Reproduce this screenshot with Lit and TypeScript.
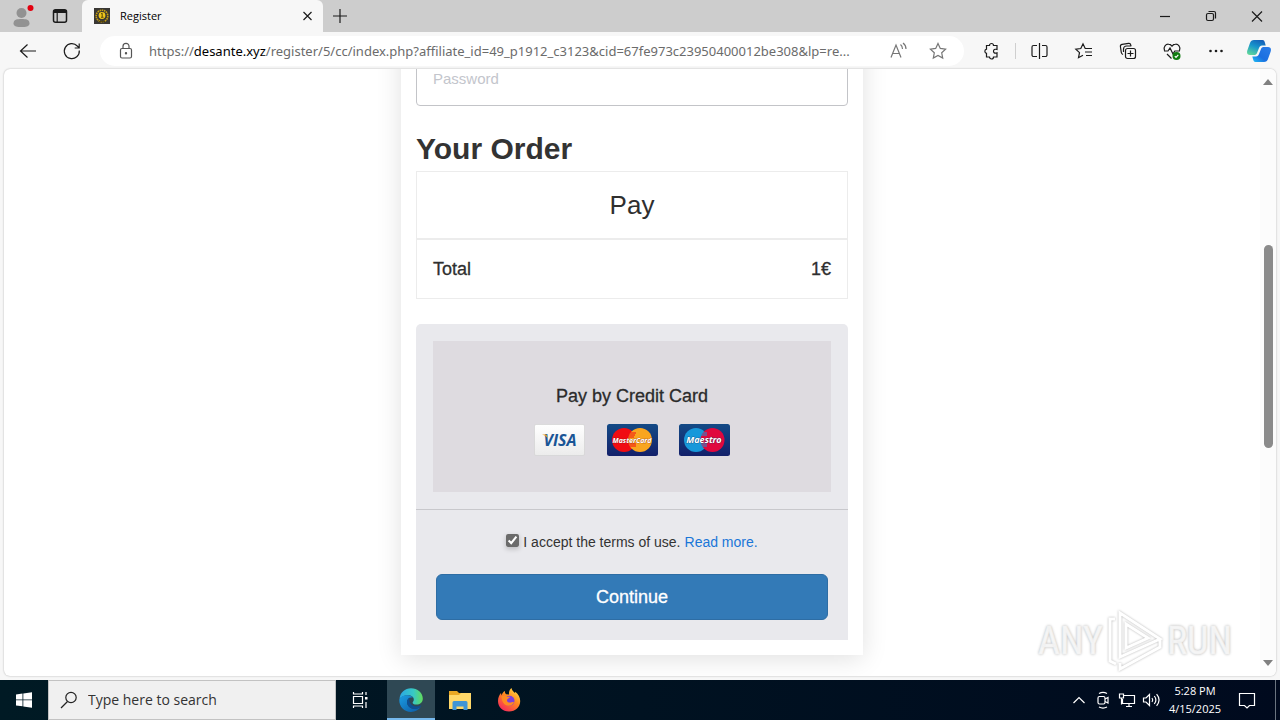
import { LitElement, html, css, svg } from "lit";
import { customElement, property, state } from "lit/decorators.js";

const icons: Record<string, unknown> = {
  profile: svg`<circle cx="10.500" cy="7" r="5" fill="#929292"/><path d="M2.500 17.500C2.500 13.500 6 13 10.500 13s8 .5 8 4.500c0 3-4 3.500-8 3.500s-8-.5-8-3.500Z" fill="#929292"/><circle cx="19.500" cy="2" r="3" fill="#e3000f"/>`,
  workspaces: svg`<rect x="4.500" y="3.700" width="13" height="12.600" rx="2" stroke-width="1.500"/><path d="M4.500 5.500h13" stroke-width="3"/><path d="M8.200 7v9"/>`,
  close: svg`<path d="M6.500 6l8 8M14.500 6l-8 8"/>`,
  plus: svg`<path d="M10 3v14M3 10h14"/>`,
  minimize: svg`<path d="M5 10.500h10"/>`,
  restore: svg`<rect x="5.500" y="7.500" width="7" height="7" rx="1.500"/><path d="M7.500 5.500H13a1.500 1.500 0 0 1 1.500 1.500v5.500"/>`,
  winclose: svg`<path d="M5 5.500l10 10M15 5.500l-10 10"/>`,
  back: svg`<path d="M18 10H2.500M9.500 3.500L2.500 10l7 6.500"/>`,
  reload: svg`<path d="M17.300 9.500a7.500 7.500 0 1 1-2-4.500l1.700 1.700M17.200 2.500v4.500h-4.500"/>`,
  lock: svg`<rect x="5.500" y="7.500" width="11" height="9.500" rx="1.500"/><path d="M8 7.500V5.300a3 3 0 0 1 6 0v2.200"/><circle cx="11" cy="12.200" r=".6" fill="currentColor"/>`,
  read: svg`<path d="M2 16.500L7 4l5 12.500M3.800 12.500h6.400M11.500 3.500c1.500 1.200 2 2.700 2 4.500M14 2c2 1.500 3 3.500 3 6"/>`,
  star: svg`<path d="M9 2.500l2.300 4.900 5.300.7-3.900 3.700 1 5.300L9 14.500l-4.700 2.600 1-5.300L1.400 8.100l5.300-.7z"/>`,
  extensions: svg`<path d="M4.500 4.500h3a2 2 0 0 1 4 0h3.500v4c-2.500-.8-3.500.3-3.500 1.700s1 2.500 3.500 1.700v4.100h-3.500a2 2 0 0 1-4 0h-3v-3.700a2.100 2.100 0 0 1 0-4.100z"/>`,
  split: svg`<path d="M9.500 2v16M7 4.500H3.500A1.500 1.500 0 0 0 2 6v8a1.500 1.500 0 0 0 1.500 1.500H7M12 4.500h3.500A1.500 1.500 0 0 1 17 6v8a1.500 1.500 0 0 1-1.500 1.500H12"/>`,
  favorites: svg`<path d="M12 7.500h-.8L9 2.800 6.800 7.500l-5 .6 3.700 3.500-1 5.100L9 14.200M12 7.500h6M11 11h7M12 14.500h6"/>`,
  collections: svg`<rect x="7.500" y="7.500" width="10" height="10" rx="2"/><path d="M12.500 9.500v6M9.500 12.500h6M5 13.500c-1-.4-1.500-1-1.700-2L2.400 5.500a2 2 0 0 1 1.700-2.200l6.500-.9a2 2 0 0 1 2.200 1.600l.2 1.200M5.500 11V8a3 3 0 0 1 3-3h5"/>`,
  essentials: svg`<path d="M2.500 9.500C1 5.500 4 3 6.500 3.200 8.300 3.300 9.300 4.300 10 5.200c.7-.9 1.700-1.900 3.500-2 2.500-.2 5.500 2.300 4 6.300M2 10h4l2-3 3 6 1.800-3H18M5 13l4.500 4.500"/><circle cx="14.500" cy="15" r="4" fill="#107c10" stroke="none"/><path d="M12.800 15.200l1.200 1.200 2.300-2.500" stroke="#fff"/>`,
  more: svg`<g fill="currentColor" stroke="none"><circle cx="4.500" cy="10" r="1.300"/><circle cx="10" cy="10" r="1.300"/><circle cx="15.500" cy="10" r="1.300"/></g>`,
  windows: svg`<path d="M2 4.400l6.500-.9v6H2zM9.300 3.400L18 2.200v7.300H9.300zM2 10.300h6.500v6L2 15.400zM9.300 10.300H18v7.400l-8.700-1.200z" fill="#fff" stroke="none"/>`,
  search: svg`<circle cx="12" cy="7.500" r="5.200"/><path d="M8.500 11.500L2 18"/>`,
  taskview: svg`<path d="M3.500 2v2h9V2M3.500 18v-2h9v2M3.500 6.500h9v7h-9zM16 2v3M16 12v6"/><rect x="15" y="7" width="2.500" height="2.500" fill="#fff" stroke="none"/>`,
  chevron: svg`<path d="M4.500 13l5.500-5.500 5.500 5.500"/>`,
  camera: svg`<rect x="5" y="6.500" width="7" height="7.500" rx="1.500"/><path d="M12 9l3-1.500v5.500l-3-1.500M6 3.500c2.500-1.300 5.500-1.300 8 0M6 17c2.500 1.300 5.500 1.300 8 0"/>`,
  network: svg`<path d="M7 5.500h10.500v8H5.500V9M9 16.500h6M12 13.500v3M2.500 4h4v4h-4zM4.500 8v6.500"/>`,
  sound: svg`<path d="M2.500 8v4h2.500l3.500 3.500v-11L5 8zM11 8c1 1.300 1 2.700 0 4M13.300 6c2 2.500 2 5.500 0 8M15.600 4.200c3 3.500 3 8 0 11.600"/>`,
  notify: svg`<path d="M2.500 3.500h15v12h-5L10 18l-2.500-2.500h-5z"/>`,
};

@customElement("ui-icon")
class UiIcon extends LitElement {
  @property() name = "";
  static styles = css`
    :host { display: inline-flex; }
    svg { width: 20px; height: 20px; overflow: visible; fill: none; stroke: currentColor; stroke-width: 1.200; }
    .profile { stroke: none; }
  `;
  render() {
    return html`<svg class=${this.name} viewBox="0 0 20 20" aria-hidden="true">${icons[this.name]}</svg>`;
  }
}

@customElement("browser-chrome")
class BrowserChrome extends LitElement {
  static styles = css`
    :host { display: block; font: 12px/16px "Open Sans", "Noto Sans", sans-serif; color: #1b1b1b; }
    button { border: 0; padding: 0; background: none; color: inherit; font: inherit; display: flex; align-items: center; justify-content: center; }
    .strip { display: flex; height: 32px; background: #cdcdcd; }
    .side { display: flex; padding: 0 4px 0 2px; }
    .side button { width: 38px; }
    .tab { flex: 0 1 241px; box-sizing: border-box; display: flex; align-items: center; padding: 0 6px 0 12px; background: #f7f7f7; border-radius: 6px 6px 0 0; }
    .favicon { width: 16px; height: 16px; margin-right: 10px; }
    .title { flex: 1; font-size: 11px; color: #000; }
    .tab button { width: 20px; height: 20px; }
    .new { width: 34px; }
    .window { display: flex; margin-left: auto; }
    .window button { width: 46px; }
    .bar { display: flex; align-items: center; height: 37px; padding-left: 6px; background: #f7f7f7; }
    .bar > button { width: 44px; height: 30px; }
    .address { flex: 1; min-width: 0; display: flex; align-items: center; height: 30px; margin: 0 6px; border-radius: 15px; background: #fff; }
    .address button { width: 40px; height: 30px; color: #767676; }
    .address .lock { width: 49px; color: #555; }
    .address .end { margin-right: 5px; }
    .url { flex: 1; min-width: 0; overflow: hidden; white-space: nowrap; font-family: "Noto Sans", "Open Sans", sans-serif; font-size: 13px; line-height: 20px; color: #6b6b6b; }
    .url b { font-weight: 400; color: #000; }
    .rule { width: 1px; height: 16px; margin: 0 2px 0 1px; background: #cfcfcf; }
    .bar > .copilot { width: 42px; }
    .copilot svg { width: 24px; height: 24px; }
  `;
  render() {
    return html`
      <div class="strip">
        <div class="side">
          <button aria-label="Profile"><ui-icon name="profile"></ui-icon></button>
          <button aria-label="Tab actions"><ui-icon name="workspaces"></ui-icon></button>
        </div>
        <div class="tab">
          <svg class="favicon" viewBox="0 0 16 16" aria-hidden="true">
            <rect width="16" height="16" fill="#3a3834"/>
            <circle cx="8" cy="8" r="5.800" fill="none" stroke="#c9a010" stroke-width="1.600" stroke-dasharray="1.500 .7"/>
            <circle cx="8" cy="7.500" r="3.400" fill="#efc61b"/>
            <path d="M7 6l1.200-.8V9M7 9.300h2.500M5 13.500h6" stroke="#4d3e08" fill="none" stroke-width=".9"/>
          </svg>
          <span class="title">Register</span>
          <button aria-label="Close tab"><ui-icon name="close"></ui-icon></button>
        </div>
        <button class="new" aria-label="New tab"><ui-icon name="plus"></ui-icon></button>
        <div class="window">
          <button aria-label="Minimize"><ui-icon name="minimize"></ui-icon></button>
          <button aria-label="Restore"><ui-icon name="restore"></ui-icon></button>
          <button aria-label="Close"><ui-icon name="winclose"></ui-icon></button>
        </div>
      </div>
      <div class="bar">
        <button aria-label="Back"><ui-icon name="back"></ui-icon></button>
        <button aria-label="Refresh"><ui-icon name="reload"></ui-icon></button>
        <div class="address">
          <button class="lock" aria-label="Site information"><ui-icon name="lock"></ui-icon></button>
          <div class="url" role="textbox" tabindex="0" aria-label="Address">https://<b>desante.xyz</b>/register/5/cc/index.php?affiliate_id=49_p1912_c3123&amp;cid=67fe973c23950400012be308&amp;lp=re...</div>
          <button aria-label="Read aloud"><ui-icon name="read"></ui-icon></button>
          <button class="end" aria-label="Favorite"><ui-icon name="star"></ui-icon></button>
        </div>
        <button aria-label="Extensions"><ui-icon name="extensions"></ui-icon></button>
        <span class="rule"></span>
        ${["split", "favorites", "collections", "essentials", "more"].map(
          (n) => html`<button aria-label=${n}><ui-icon name=${n}></ui-icon></button>`
        )}
        <button class="copilot" aria-label="Copilot">
          <svg viewBox="0 0 24 24">
            <defs>
              <linearGradient id="ca" x1="0.700" y1="0" x2=".2" y2="1"><stop stop-color="#1560b8"/><stop offset=".45" stop-color="#1795cc"/><stop offset="1" stop-color="#5fd79a"/></linearGradient>
              <linearGradient id="cb" x1="1" y1="0" x2="0" y2="1"><stop stop-color="#2b7de8"/><stop offset=".6" stop-color="#1b6fe0"/><stop offset="1" stop-color="#1fc0f5"/></linearGradient>
            </defs>
            <path d="M7 1h8.500c1.500 0 2 1 2.500 3l.7 2.500H15c-1.500 0-2.500 1-3 2.500l-2 5c-.6 1.500-1.500 2-3 2H3c-2.500 0-3.500-1.500-2.700-4.500L3 4c.6-2 2-3 4-3Z" fill="url(#ca)"/>
            <path d="M17 23H8.500c-1.500 0-2-1-2.500-3l-.7-2.500H9c1.500 0 2.500-1 3-2.500l2-5c.6-1.500 1.500-2 3-2h4c2.500 0 3.500 1.500 2.700 4.500L21 20c-.6 2-2 3-4 3Z" fill="url(#cb)"/>
          </svg>
        </button>
      </div>
    `;
  }
}

@customElement("order-card")
class OrderCard extends LitElement {
  @state() private accepted = true;
  static styles = css`
    :host { display: block; box-sizing: border-box; width: 462px; max-width: 100%; padding: 15px; background: #fff; box-shadow: 0 4px 24px rgba(0, 0, 0, .12); color: #333; font: 18px/24px "Liberation Sans", Arial, sans-serif; }
    .password { display: block; box-sizing: border-box; width: 100%; height: 54px; padding: 0 16px 2px; border: 1px solid #c3c4c8; border-radius: 4px; font: 15px/20px "Liberation Sans", Arial, sans-serif; background: #fff; }
    .password::placeholder { color: #c3c5cc; opacity: 1; }
    h2 { margin: 25px 0 4px; font-size: 30px; line-height: 36px; font-weight: 700; color: #333; }
    .row { display: flex; justify-content: space-between; align-items: center; padding: 17px 16px; border: 1px solid #ececec; color: #2f2f2f; -webkit-text-stroke: .3px currentColor; }
    .pay { justify-content: center; padding: 16px; font-size: 26px; line-height: 34px; -webkit-text-stroke: 0; }
    .payment { margin-top: 25px; background: #e9e9ed; border-radius: 5px 5px 0 0; }
    .methods { padding: 17px; border-bottom: 1px solid #c8c8cc; }
    .method { display: flex; flex-direction: column; align-items: center; gap: 16px; padding: 43px 0 36px; background: #dedbe0; color: #2b2b2b; -webkit-text-stroke: .3px currentColor; }
    .logos { display: flex; gap: 20px; -webkit-text-stroke: 0; }
    .logos svg { width: 52px; height: 32px; }
    .logos text { font-family: "Open Sans", sans-serif; font-weight: 700; font-style: italic; text-anchor: middle; }
    .confirm { padding: 20px; display: flex; flex-direction: column; gap: 20px; }
    .terms { display: flex; justify-content: center; align-items: center; gap: 4px; font-size: 14px; line-height: 24px; }
    .terms input { width: 13px; height: 13px; margin: 0 0 3px; accent-color: #6b6b6b; box-shadow: 0 2px 5px rgba(0, 0, 0, .2); }
    .terms a { color: #1a76d8; text-decoration: none; }
    .continue { height: 46px; border: 1px solid #2e6da4; border-radius: 6px; background: #337ab7; color: #fff; font: inherit; -webkit-text-stroke: .3px currentColor; }
  `;
  render() {
    return html`
      <input class="password" type="password" placeholder="Password" aria-label="Password">
      <h2>Your Order</h2>
      <div class="row pay">Pay</div>
      <div class="row"><span>Total</span><span>1€</span></div>
      <section class="payment">
        <div class="methods">
          <div class="method">
            <span>Pay by Credit Card</span>
            <div class="logos">
              <svg viewBox="0 0 52 32" role="img" aria-label="Visa">
                <defs><linearGradient id="v" x2="0" y2="1"><stop stop-color="#fff"/><stop offset="1" stop-color="#ececec"/></linearGradient></defs>
                <rect x=".5" y=".5" width="50" height="31" rx="1.500" fill="url(#v)" stroke="#d3d3d3" stroke-width=".7"/>
                <text x="26" y="22" font-size="16" fill="#1a5596">VISA</text>
                <path d="M8 10.500h4.500l1.500 4c-1.500-2-3-3.300-6-4Z" fill="#e8a32b"/>
              </svg>
              <svg viewBox="0 0 52 32" role="img" aria-label="MasterCard">
                <defs><linearGradient id="m" x2="0" y2="1"><stop stop-color="#134a86"/><stop offset="1" stop-color="#13206a"/></linearGradient></defs>
                <rect x="1" width="51" height="32" rx="2.500" fill="url(#m)"/>
                <circle cx="18" cy="16" r="12" fill="#f00c12"/><circle cx="34" cy="16" r="12" fill="#f9a51f"/>
                <path d="M22 9h8M22 11h7M21 13h7M22 20h8M23 22h7" stroke="#f00c12"/>
                <text x="26" y="19" font-size="7" fill="#fff" stroke="#7a1712" stroke-width=".4" paint-order="stroke">MasterCard</text>
              </svg>
              <svg viewBox="0 0 52 32" role="img" aria-label="Maestro">
                <defs><linearGradient id="s" x2="0" y2="1"><stop stop-color="#134a86"/><stop offset="1" stop-color="#13206a"/></linearGradient></defs>
                <rect x="1" width="51" height="32" rx="2.500" fill="url(#s)"/>
                <circle cx="18" cy="16" r="12" fill="#1798da"/><circle cx="34.500" cy="16" r="12" fill="#e0083e"/>
                <path d="M22 9h7M22 11h7M22 20h7M23 22h6" stroke="#1798da"/>
                <text x="26" y="19" font-size="9" fill="#fff" stroke="#17345f" stroke-width=".5" paint-order="stroke">Maestro</text>
              </svg>
            </div>
          </div>
        </div>
        <div class="confirm">
          <div class="terms">
            <input id="accept" type="checkbox" .checked=${this.accepted}
              @change=${(e: Event) => (this.accepted = (e.target as HTMLInputElement).checked)}>
            <label for="accept">I accept the terms of use.</label>
            <a href="#terms">Read more.</a>
          </div>
          <button class="continue">Continue</button>
        </div>
      </section>
    `;
  }
}

@customElement("task-bar")
class TaskBar extends LitElement {
  static styles = css`
    :host { display: flex; height: 40px; background: linear-gradient(90deg, #001a24, #000a1e); color: #fff; font: 11px/18px "Open Sans", "Noto Sans", sans-serif; }
    button { border: 0; padding: 0; width: 48px; background: none; color: inherit; font: inherit; display: flex; align-items: center; justify-content: center; }
    .search { flex: 0 1 288px; box-sizing: border-box; display: flex; align-items: center; gap: 9px; padding: 0 10px; background: #f0f0f0; border: 1px solid #c2c2c2; color: #222; }
    .search input { flex: 1; min-width: 0; border: 0; padding: 0; background: none; font: 14px/20px "Open Sans", "Noto Sans", sans-serif; }
    .search input::placeholder { color: #333; opacity: 1; }
    .apps { display: flex; margin-left: 3px; }
    .app { width: 49px; }
    .app svg { width: 26px; height: 26px; }
    .active { width: 48px; box-sizing: border-box; background: #2f4854; border-bottom: 2px solid #76b9ed; border-top: 2px solid transparent; }
    .tray { display: flex; margin-left: auto; }
    .tray button { width: 24px; }
    .tray .clock { width: 64px; flex-direction: column; }
    .tray .notify { width: 40px; }
    .desktop { width: 4px; margin-left: 8px; border-left: 1px solid #6a7480; }
  `;
  render() {
    return html`
      <button aria-label="Start"><ui-icon name="windows"></ui-icon></button>
      <label class="search"><ui-icon name="search"></ui-icon><input placeholder="Type here to search" aria-label="Search"></label>
      <button aria-label="Task view"><ui-icon name="taskview"></ui-icon></button>
      <div class="apps">
        <button class="active app" aria-label="Edge">
          <svg viewBox="0 0 26 26">
            <defs>
              <linearGradient id="e1" x1="0" y1=".3" x2="1" y2=".3"><stop stop-color="#2aa7e6"/><stop offset=".6" stop-color="#38c9c4"/><stop offset="1" stop-color="#62dc5b"/></linearGradient>
              <linearGradient id="e2" x2="1" y2="1"><stop stop-color="#1b9de2"/><stop offset="1" stop-color="#0c59a4"/></linearGradient>
            </defs>
            <path d="M1.500 12C2 5.500 7 1.200 13 1.200c6.500 0 11.800 4.500 11.800 10.300 0 4-3 6-6.200 6-2.800 0-4-1-4-1.800 0-.7 1.200-1.200 1.200-3.200 0-2.300-2.300-4.200-5.800-4.200-4 0-7 1.700-8.500 3.700Z" fill="url(#e1)"/>
            <path d="M1.300 12.500C2.500 9.500 6 8 10 8.300c2 .2 4 1.200 5 2.500-3-1.300-6 .7-6 4.200 0 4 3.500 7 8 7 2 0 4-.8 5.700-1.900-2 3-5.500 4.800-9.700 4.800-6.500 0-12-5-11.700-12.400Z" fill="url(#e2)"/>
            <path d="M9 15c0-2 1-3.500 2.500-4.300-1 4.800 2 8.600 7 8.700 1.800 0 3.200-.4 4.400-.9.400-.1.600.3.300.6C21.500 21.200 19 22 17 22c-4.500 0-8-3-8-7Z" fill="#0d4f94"/>
          </svg>
        </button>
        <button class="app" aria-label="File Explorer">
          <svg viewBox="0 0 26 26">
            <path d="M2 4h8l2 2h12v16H2z" fill="#e9a824"/><path d="M2 8h10l2-2h10v16H2z" fill="#ffd869"/>
            <path d="M7 14h12a1.500 1.500 0 0 1 1.500 1.500V23h-4v-3.500h-7V23h-4v-7.500A1.500 1.500 0 0 1 7 14Z" fill="#3f95d6"/>
          </svg>
        </button>
        <button class="app" aria-label="Firefox">
          <svg viewBox="0 0 26 26">
            <defs><linearGradient id="f" x1=".9" y1="0" x2=".2" y2="1"><stop stop-color="#ffe34a"/><stop offset=".45" stop-color="#ff8a1f"/><stop offset="1" stop-color="#f5245e"/></linearGradient></defs>
            <path d="M13 24.500C6.500 24.500 2 20 2 14c0-3.500 1.300-6 3-8l.5 2.500C6.500 6 7.500 4.500 9 4c-.3 1.500.3 2.700 1.300 3.300L13 7.500c-.3-3 .8-5 2.500-6.500.5 2.500 2 3.500 3.500 5l.3-1.300C22.500 7 24.200 10.500 24.200 14c0 6-4.700 10.500-11.200 10.500Z" fill="url(#f)"/>
            <circle cx="13.500" cy="13.700" r="5" fill="#7b3fdc"/>
            <path d="M5.500 9c2-1 4.500-.5 5.500.7h3c-.2 1.500-2.500 1.600-3 3-.3 1.500 1 2.800 3 2.800 1.500 0 2.500-.8 4-.5-.7 2.500-3 4-5.500 3.800C8.500 18.500 5.500 15 5.500 9Z" fill="#ff8b22"/>
          </svg>
        </button>
      </div>
      <div class="tray">
        ${["chevron", "camera", "network", "sound"].map(
          (n) => html`<button aria-label=${n}><ui-icon name=${n}></ui-icon></button>`
        )}
        <button class="clock"><span>5:28 PM</span><span>4/15/2025</span></button>
        <button class="notify" aria-label="Notifications"><ui-icon name="notify"></ui-icon></button>
        <span class="desktop"></span>
      </div>
    `;
  }
}

@customElement("app-root")
class AppRoot extends LitElement {
  static styles = css`
    :host { display: flex; flex-direction: column; height: 100vh; background: #f7f7f7; position: relative; overflow: hidden; }
    .view { flex: 1; min-height: 0; display: flex; margin: 0 4px 4px; border-radius: 6px; background: #fff; overflow: hidden; box-shadow: 0 0 2px rgba(0, 0, 0, .3); }
    .page { flex: 1; min-width: 0; display: flex; flex-direction: column; align-items: center; justify-content: flex-end; padding-bottom: 21px; overflow: hidden; }
    order-card { flex: none; }
    .scroll { width: 16px; display: flex; flex-direction: column; align-items: center; background: #fcfcfc; padding: 10px 0; box-sizing: border-box; }
    .scroll svg { width: 10px; height: 6px; fill: #808080; }
    .track { flex: 1; display: grid; grid-template-rows: 160fr 204fr 212fr; }
    .thumb { grid-row: 2; width: 9px; border-radius: 5px; background: #8b8b8b; }
    .mark { position: absolute; right: 48px; bottom: 48px; display: flex; align-items: center; gap: 4px; font: 400 38px/60px "Liberation Sans Narrow", "Roboto Condensed", "Open Sans Condensed", "Liberation Sans", sans-serif; color: rgba(255, 255, 255, .9); text-shadow: 0 0 3px rgba(0, 0, 0, .4); -webkit-text-stroke: 1px rgba(240, 240, 240, .8); pointer-events: none; }
    .mark svg { width: 56px; height: 62px; fill: none; stroke: #fff; stroke-width: 3; filter: drop-shadow(0 0 1px rgba(0, 0, 0, .3)); }
  `;
  render() {
    return html`
      <browser-chrome></browser-chrome>
      <main class="view">
        <div class="page"><order-card></order-card></div>
        <div class="scroll">
          <svg viewBox="0 0 10 6"><path d="M0 6l5-6 5 6z"/></svg>
          <div class="track"><div class="thumb"></div></div>
          <svg viewBox="0 0 10 6"><path d="M0 0l5 6 5-6z"/></svg>
        </div>
      </main>
      <task-bar></task-bar>
      <div class="mark">
        <span>ANY</span>
        <svg viewBox="0 0 56 62"><path d="M13 3v44L53 29zM19 14v24l22-10zM8 9H3v42l6 3M13 53v6l40-22v-8"/></svg>
        <span>RUN</span>
      </div>
    `;
  }
}
